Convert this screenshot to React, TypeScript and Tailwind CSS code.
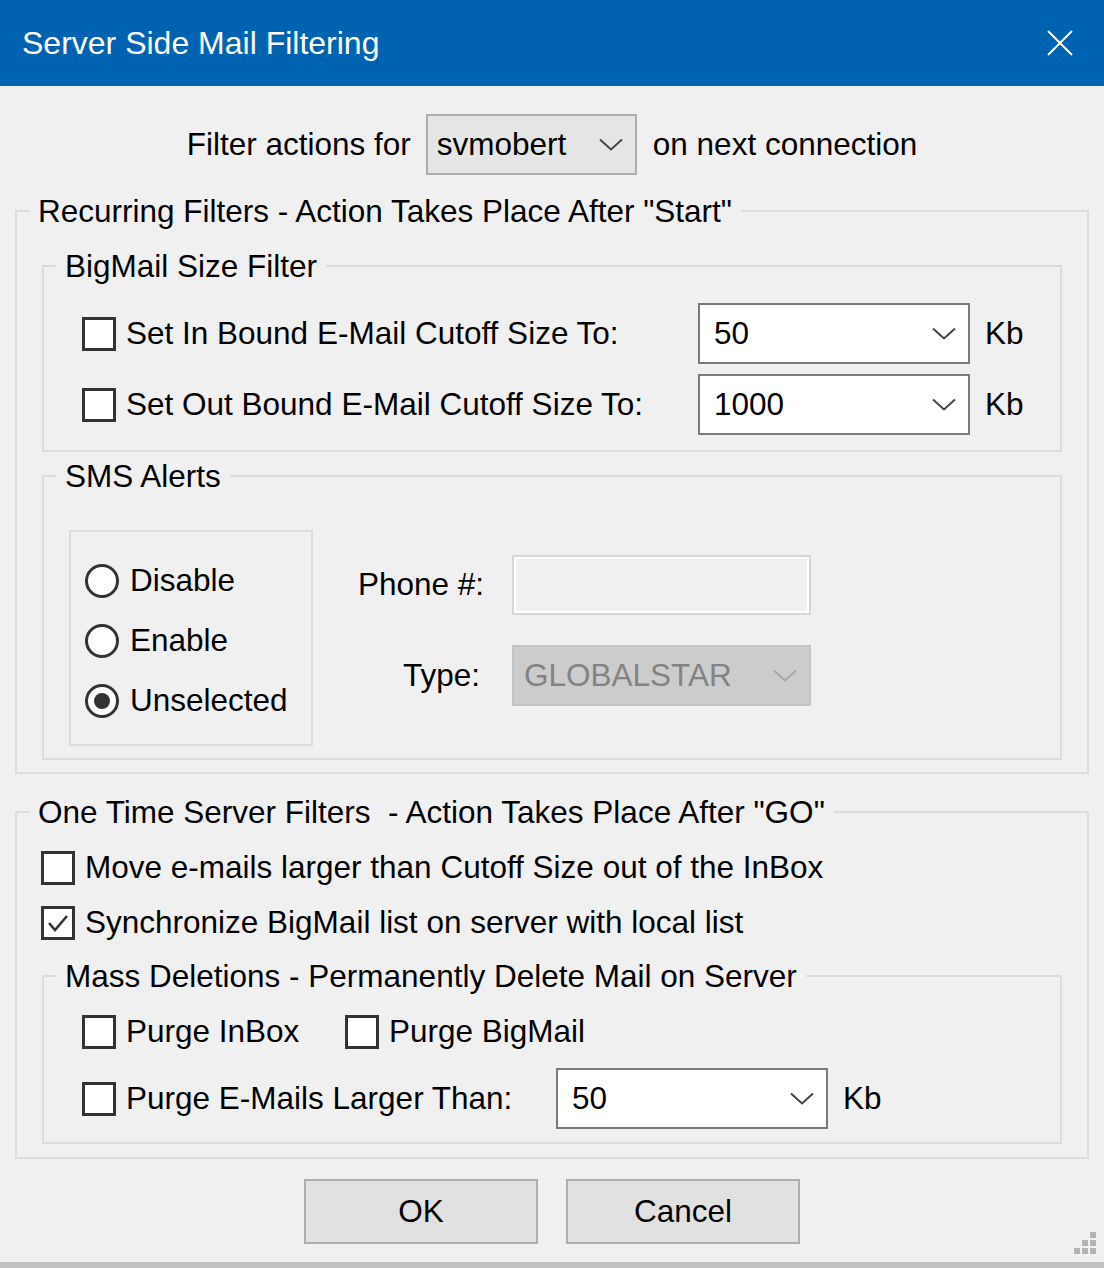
import React from 'react';

function Chevron({ color = '#444' }: { color?: string }) {
  return (
    <svg width="24" height="13" viewBox="0 0 24 13" fill="none">
      <polyline points="1,1.5 12,11.5 23,1.5" stroke={color} strokeWidth="2" />
    </svg>
  );
}

function Checkbox({ checked = false }: { checked?: boolean }) {
  return (
    <div className="w-[34px] h-[34px] shrink-0 border-[3px] border-[#333] bg-white flex items-center justify-center">
      {checked && (
        <svg width="26" height="26" viewBox="0 0 26 26" fill="none">
          <polyline points="4,13 10,20 22,6" stroke="#333" strokeWidth="2.5" />
        </svg>
      )}
    </div>
  );
}

function Radio({ selected = false }: { selected?: boolean }) {
  return (
    <div className="w-[34px] h-[34px] shrink-0 rounded-full border-[3px] border-[#333] bg-white flex items-center justify-center">
      {selected && <div className="w-[16px] h-[16px] rounded-full bg-[#333]" />}
    </div>
  );
}

function Combo({ value }: { value: string }) {
  return (
    <div className="w-[272px] h-[61px] bg-white border-2 border-[#7a7a7a] flex items-center justify-between pl-[14px] pr-[12px]">
      <span>{value}</span>
      <Chevron />
    </div>
  );
}

function CheckRow({ label, checked }: { label: string; checked?: boolean }) {
  return (
    <div className="flex items-center gap-[10px]">
      <Checkbox checked={checked} />
      <span>{label}</span>
    </div>
  );
}

function Group({ title, children }: { title: string; children: React.ReactNode }) {
  return (
    <fieldset className="border-2 border-[#dcdcdc] px-[12px]">
      <legend className="px-[9px] leading-[36px] whitespace-pre">{title}</legend>
      {children}
    </fieldset>
  );
}

export default function App() {
  return (
    <div className="w-[1104px] h-[1268px] flex flex-col bg-[#f0f0f0] text-black text-[31.5px] leading-none font-['Liberation_Sans',Arial,sans-serif]">
      {/* title bar */}
      <div className="h-[86px] shrink-0 bg-[#0063b1] flex items-center justify-between pl-[22px] pr-[31px] text-white">
        <span className="text-[32px]">Server Side Mail Filtering</span>
        <svg width="26" height="26" viewBox="0 0 26 26" fill="none">
          <line x1="1" y1="1" x2="25" y2="25" stroke="#fff" strokeWidth="2" />
          <line x1="25" y1="1" x2="1" y2="25" stroke="#fff" strokeWidth="2" />
        </svg>
      </div>

      <div className="relative flex-1 flex flex-col px-[15px] pt-[28px] pb-[17px]">
        {/* account selector */}
        <div className="flex items-center justify-center">
          <span>Filter actions for</span>
          <div className="ml-[15px] mr-[16px] w-[211px] h-[61px] bg-[#e5e5e5] border-2 border-[#adadad] flex items-center justify-between pl-[9px] pr-[12px]">
            <span>svmobert</span>
            <Chevron />
          </div>
          <span>on next connection</span>
        </div>

        {/* recurring */}
        <div className="mt-[18px]">
          <Group title={'Recurring Filters - Action Takes Place After "Start"'}>
            <div className="px-[13px] pt-[19px] pb-[12px] flex flex-col gap-[6px]">
              <Group title="BigMail Size Filter">
                <div className="pl-[26px] pt-[19px] pb-[15px] flex flex-col gap-[10px]">
                  <div className="grid grid-cols-[616px_272px_auto] items-center">
                    <CheckRow label="Set In Bound E-Mail Cutoff Size To:" />
                    <Combo value="50" />
                    <span className="ml-[15px]">Kb</span>
                  </div>
                  <div className="grid grid-cols-[616px_272px_auto] items-center">
                    <CheckRow label="Set Out Bound E-Mail Cutoff Size To:" />
                    <Combo value="1000" />
                    <span className="ml-[15px]">Kb</span>
                  </div>
                </div>
              </Group>

              <Group title="SMS Alerts">
                <div className="pl-[13px] pt-[36px] pb-[12px] flex">
                  <div className="w-[244px] h-[216px] border-2 border-[#dcdcdc] pl-[14px] pt-[6px] flex flex-col justify-center gap-[26px]">
                    <div className="flex items-center gap-[11px]">
                      <Radio />
                      <span>Disable</span>
                    </div>
                    <div className="flex items-center gap-[11px]">
                      <Radio />
                      <span>Enable</span>
                    </div>
                    <div className="flex items-center gap-[11px]">
                      <Radio selected />
                      <span>Unselected</span>
                    </div>
                  </div>
                  <div className="ml-[17px] mt-[25px] self-start grid grid-cols-[154px_299px] gap-x-[28px] gap-y-[30px] items-center">
                    <span className="justify-self-end">Phone #:</span>
                    <div className="h-[60px] bg-[#f0f0f0] border-2 border-[#d6d6d6] shadow-[inset_0_0_0_2px_#ffffff]" />
                    <span className="justify-self-end pr-[4px]">Type:</span>
                    <div className="h-[61px] bg-[#cccccc] border-2 border-[#c4c4c4] flex items-center justify-between pl-[10px] pr-[12px] text-[#838383]">
                      <span>GLOBALSTAR</span>
                      <Chevron color="#a8a8a8" />
                    </div>
                  </div>
                </div>
              </Group>
            </div>
          </Group>
        </div>

        {/* one time */}
        <div className="mt-[20px]">
          <Group title={'One Time Server Filters  - Action Takes Place After "GO"'}>
            <div className="px-[13px] pt-[18px] pb-[13px] flex flex-col">
              <div className="h-[40px] flex items-center -ml-[1px]">
                <CheckRow label="Move e-mails larger than Cutoff Size out of the InBox" />
              </div>
              <div className="h-[40px] mt-[15px] flex items-center -ml-[1px]">
                <CheckRow label="Synchronize BigMail list on server with local list" checked />
              </div>
              <div className="mt-[15px]">
                <Group title="Mass Deletions - Permanently Delete Mail on Server">
                  <div className="pl-[26px] pt-[18px] pb-[13px] flex flex-col gap-[16px]">
                    <div className="h-[40px] flex items-center">
                      <div className="w-[263px]">
                        <CheckRow label="Purge InBox" />
                      </div>
                      <CheckRow label="Purge BigMail" />
                    </div>
                    <div className="flex items-center">
                      <div className="w-[474px]">
                        <CheckRow label="Purge E-Mails Larger Than:" />
                      </div>
                      <Combo value="50" />
                      <span className="ml-[15px]">Kb</span>
                    </div>
                  </div>
                </Group>
              </div>
            </div>
          </Group>
        </div>

        {/* buttons */}
        <div className="mt-[20px] flex justify-center gap-[28px]">
          <button className="w-[234px] h-[65px] bg-[#e1e1e1] border-2 border-[#adadad]">OK</button>
          <button className="w-[234px] h-[65px] bg-[#e1e1e1] border-2 border-[#adadad]">Cancel</button>
        </div>

        {/* resize grip */}
        <svg className="absolute right-[8px] bottom-[8px]" width="22" height="22" viewBox="0 0 22 22">
          <rect x="16" y="0" width="6" height="6" fill="#b4b4b4" />
          <rect x="8" y="8" width="6" height="6" fill="#b4b4b4" />
          <rect x="16" y="8" width="6" height="6" fill="#b4b4b4" />
          <rect x="0" y="16" width="6" height="6" fill="#b4b4b4" />
          <rect x="8" y="16" width="6" height="6" fill="#b4b4b4" />
          <rect x="16" y="16" width="6" height="6" fill="#b4b4b4" />
        </svg>
      </div>
      <div className="h-[6px] shrink-0 bg-[#c2c2c2]" />
    </div>
  );
}
